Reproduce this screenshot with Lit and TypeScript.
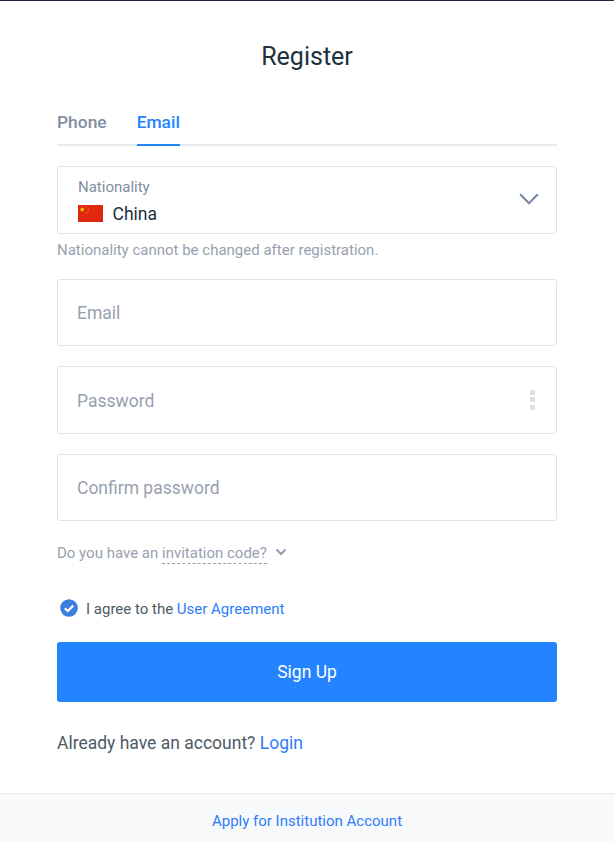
import { css, CSSResultGroup, html, LitElement, TemplateResult } from "lit";
import { customElement, state } from "lit/decorators.js";
import { classMap } from "lit/directives/class-map.js";

type Tab = "Phone" | "Email";

@customElement("app-root")
class AppRoot extends LitElement {
  @state() tab: Tab = "Email";

  @state() agreed = true;

  protected render(): TemplateResult {
    return html`
      <main>
        <h1>Register</h1>
        <nav class="tabs">${this._tab("Phone")} ${this._tab("Email")}</nav>

        <div class="box nationality">
          <div class="country">
            <span class="label">Nationality</span>
            <span class="value">
              <svg class="flag" viewBox="0 0 25 17">
                <rect width="25" height="17" fill="#de2910" />
                <path
                  d="M4.2 1.9l.7 1.7 1.8.1-1.4 1.2.5 1.8-1.6-1-1.6 1 .5-1.8-1.4-1.2 1.8-.1z"
                  fill="#ffcf00"
                />
                <g fill="#ee7a0a">
                  <circle cx="8.6" cy="1.8" r=".7" />
                  <circle cx="10.3" cy="3.6" r=".7" />
                  <circle cx="10.3" cy="6" r=".7" />
                  <circle cx="8.6" cy="7.8" r=".7" />
                </g>
              </svg>
              <span class="name">China</span>
            </span>
          </div>
          <svg class="arrow" viewBox="0 0 20 12">
            <path d="M1.2 1.2L10 10.2l8.8-9" />
          </svg>
        </div>
        <p class="hint">Nationality cannot be changed after registration.</p>

        <div class="fields">
          <div class="box">
            <input type="text" placeholder=${this.tab} />
          </div>
          <div class="box">
            <input type="password" placeholder="Password" />
            <div class="strength"><i></i><i></i><i></i></div>
          </div>
          <div class="box">
            <input type="password" placeholder="Confirm password" />
          </div>
        </div>

        <div class="invite">
          <span>Do you have an <span class="code">invitation code?</span></span>
          <svg viewBox="0 0 12 8"><path d="M1.5 1.5L6 6l4.5-4.5" /></svg>
        </div>

        <div class="agree">
          <svg
            class=${classMap({ off: !this.agreed })}
            viewBox="0 0 18 18"
            @click=${this._toggleAgreed}
          >
            <circle cx="9" cy="9" r="8.8" />
            <path d="M4.8 9.2l3 2.8 5.4-5.4" />
          </svg>
          <span>I agree to the <a>User Agreement</a></span>
        </div>

        <button class="submit">Sign Up</button>
        <p class="login">Already have an account? <a>Login</a></p>
      </main>
      <footer><a>Apply for Institution Account</a></footer>
    `;
  }

  private _tab(name: Tab): TemplateResult {
    return html`<button
      class=${classMap({ tab: true, active: this.tab === name })}
      @click=${() => {
        this.tab = name;
      }}
    >
      ${name}
    </button>`;
  }

  private _toggleAgreed(): void {
    this.agreed = !this.agreed;
  }

  static get styles(): CSSResultGroup {
    return css`
      :host {
        display: flex;
        flex-direction: column;
        height: 842px;
        box-sizing: border-box;
        border-top: 1px solid #1f2747;
        background: #fff;
        color: #20303c;
        font-family: Roboto, "Liberation Sans", sans-serif;
        overflow: hidden;
      }

      * {
        box-sizing: border-box;
      }

      main {
        height: 792px;
        padding: 0 57px;
      }

      h1 {
        margin: 0;
        padding-top: 41px;
        font-size: 25px;
        font-weight: 400;
        line-height: 30px;
        text-align: center;
      }

      button,
      input {
        font-family: inherit;
        border: 0;
        padding: 0;
        margin: 0;
        background: none;
        outline: none;
      }

      a {
        color: #2f7dfb;
        cursor: pointer;
      }

      /* tabs */
      .tabs {
        display: flex;
        gap: 30px;
        height: 37px;
        margin-top: 37px;
        border-bottom: 2px solid #e6ebf0;
      }

      .tab {
        height: 37px;
        padding-bottom: 9px;
        border-bottom: 2px solid transparent;
        color: #828ea1;
        font-size: 17.4px;
        font-weight: 500;
        line-height: 24px;
        cursor: pointer;
      }

      .tab.active {
        color: #2483ff;
        border-color: #2483ff;
      }

      /* form boxes */
      .box {
        display: flex;
        align-items: center;
        justify-content: space-between;
        height: 67.5px;
        padding: 0 21px 0 19px;
        border: 1px solid #dfe2e9;
        border-radius: 3px;
      }

      .nationality {
        height: 68px;
        margin-top: 20px;
        padding: 0 17.5px 0 20px;
      }

      .country {
        display: flex;
        flex-direction: column;
        gap: 5px;
        padding-top: 2px;
      }

      .label {
        color: #828ea1;
        font-size: 15px;
        line-height: 20px;
      }

      .value {
        display: flex;
        align-items: center;
        gap: 9.5px;
        font-size: 17.5px;
        line-height: 24px;
      }

      .flag {
        width: 25px;
        height: 17px;
      }

      .arrow {
        width: 20px;
        height: 12px;
        margin-bottom: 2px;
        fill: none;
        stroke: #7b8ba5;
        stroke-width: 2.2;
      }

      .hint {
        margin: 6px 0 0;
        color: #989fb0;
        font-size: 15px;
        line-height: 20px;
      }

      .fields {
        display: flex;
        flex-direction: column;
        gap: 20px;
        margin-top: 18.6px;
      }

      .fields input {
        flex: 1;
        height: 100%;
        padding-top: 2px;
        font-size: 17.5px;
        color: #20303c;
      }

      .fields input::placeholder {
        color: #989fb0;
        opacity: 1;
      }

      .strength {
        display: flex;
        flex-direction: column;
        gap: 2.5px;
      }

      .strength i {
        width: 5px;
        height: 5px;
        border-radius: 1px;
        background: #dcdfe6;
      }

      .invite {
        display: flex;
        align-items: center;
        gap: 8px;
        height: 22px;
        margin-top: 21px;
        color: #989fb0;
        font-size: 15px;
        line-height: 20px;
      }

      .code {
        display: inline-block;
        border-bottom: 1px dashed #989fb0;
      }

      .invite svg {
        width: 12px;
        height: 8px;
        margin-bottom: 2px;
        fill: none;
        stroke: #8f98ac;
        stroke-width: 2;
      }

      .agree {
        display: flex;
        align-items: center;
        gap: 8px;
        height: 20px;
        margin-top: 34px;
        padding-left: 3px;
        color: #4e5a66;
        font-size: 15px;
        line-height: 20px;
      }

      .agree span {
        padding-top: 2px;
      }

      .agree svg {
        width: 18px;
        height: 18px;
        fill: #3a7fe0;
        cursor: pointer;
      }

      .agree svg.off {
        fill: #dcdfe6;
      }

      .agree path {
        fill: none;
        stroke: #fff;
        stroke-width: 2.2;
      }

      .submit {
        display: block;
        width: 100%;
        height: 60px;
        margin-top: 24px;
        border-radius: 3px;
        background: #2483ff;
        color: #fff;
        font-size: 17.5px;
        cursor: pointer;
      }

      .login {
        margin: 29px 0 0;
        color: #4e5a66;
        font-size: 17.5px;
        line-height: 24px;
      }

      footer {
        flex: 1;
        padding-top: 17px;
        border-top: 1px solid #e6e9ee;
        background: #f7f9fb;
        font-size: 15px;
        line-height: 20px;
        text-align: center;
      }
    `;
  }
}

declare global {
  interface HTMLElementTagNameMap {
    "app-root": AppRoot;
  }
}
